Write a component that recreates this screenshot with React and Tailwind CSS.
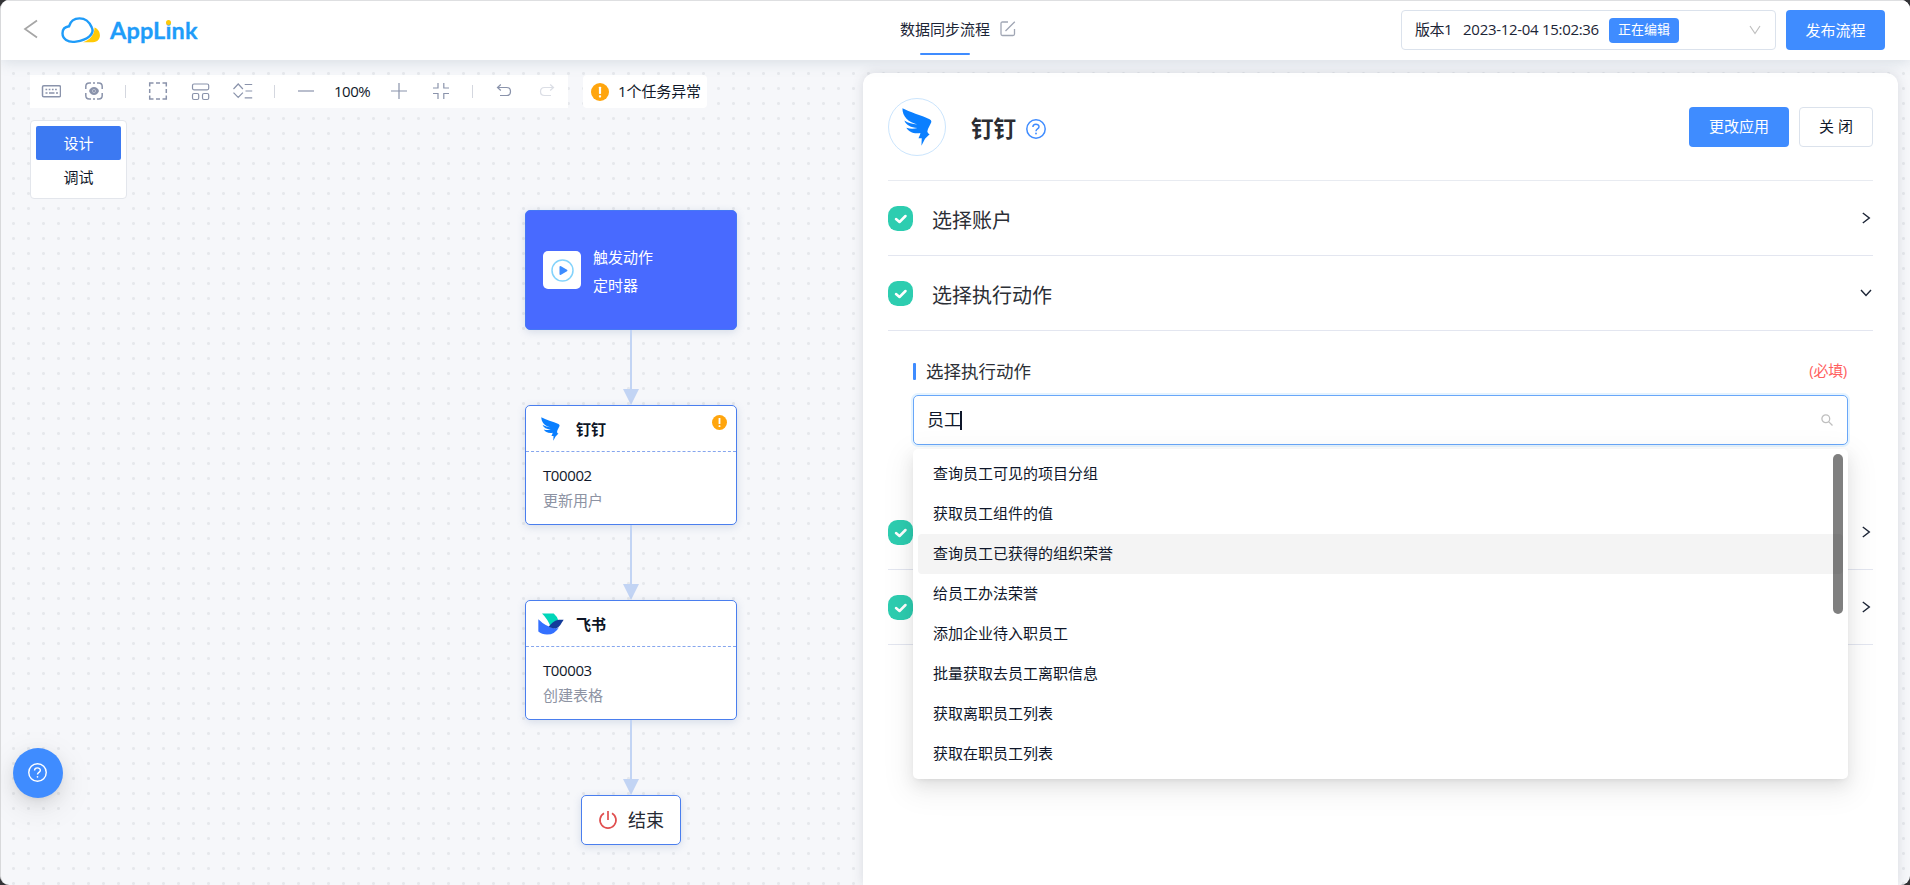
import React from "react";

const options = [
  "查询员工可见的项目分组",
  "获取员工组件的值",
  "查询员工已获得的组织荣誉",
  "给员工办法荣誉",
  "添加企业待入职员工",
  "批量获取去员工离职信息",
  "获取离职员工列表",
  "获取在职员工列表",
];

function DingTalk({ className }) {
  return (
    <svg className={className} viewBox="156 322 91 116" fill="#0a7fff">
      <path d="M157 323C178 334 214 345 240 356Q248 360 244 368L235 386L233 394Q234 401 240 402L226 416L215 437L216 414L206 414Q211 405 212 398C192 402 176 394 169 382C180 386 192 386 203 383C183 382 168 374 163 360C175 368 188 371 202 372C174 365 157 348 157 323Z" />
    </svg>
  );
}

function Feishu({ className }) {
  return (
    <svg className={className} viewBox="113 248 78 65">
      <path fill="#00d6b9" d="M125 249H160Q171 258 174 270Q162 272 152 291Q141 264 125 249Z" />
      <path fill="#3370ff" d="M114 266Q136 288 162 293Q170 295 176 290Q164 312 140 312Q124 312 114 303Z" />
      <path fill="#133c9a" d="M145 289C156 273 168 265 190 268C182 279 178 292 166 294Q154 294 145 289Z" />
    </svg>
  );
}

function CloudLogo() {
  return (
    <svg className="h-[27px] w-[40px]" viewBox="0 0 40 27">
      <path fill="#ffc907" d="M33.5 10.5C41 13 41 25.300 32 25.300H22C29 23 33.500 18 33.500 10.500Z" />
      <path fill="#fff" stroke="#1f9cf9" strokeWidth="2.4" d="M15 24.600C6.500 26 1.500 21.500 1.500 16.300C1.500 12 4.500 9.800 8 9.300C9.500 4 13.500 1.400 18.500 1.400C24.500 1.400 28.500 5 30.800 10.500C34 17 26.500 22.800 15 24.600Z" />
    </svg>
  );
}

function Help({ className }) {
  return (
    <svg className={className} viewBox="0 0 20 20" fill="none" stroke="currentColor">
      <circle cx="10" cy="10" r="9.200" strokeWidth="1.5" />
      <path strokeWidth="1.500" d="M6.900 7.900C6.900 4.200 13 4.300 13 7.700C13 10 10 9.800 10 12.200" />
      <circle cx="10" cy="14.500" r=".9" fill="currentColor" stroke="none" />
    </svg>
  );
}

function Warn({ className }) {
  return (
    <svg className={className} viewBox="0 0 18 18">
      <circle cx="9" cy="9" r="9" fill="#ffa50d" />
      <rect x="7.900" y="3.700" width="2.200" height="7.200" rx=".6" fill="#fff" />
      <rect x="7.900" y="12.200" width="2.200" height="2.200" rx=".6" fill="#fff" />
    </svg>
  );
}

function Check() {
  return (
    <svg className="h-[25px] w-[25px] shrink-0" viewBox="0 0 25 25">
      <rect width="25" height="25" rx="9.500" fill="#2dcdb0" />
      <path d="M8 13L11.500 16L17.500 10" fill="none" stroke="#fff" strokeWidth="2.500" strokeLinecap="round" strokeLinejoin="round" />
    </svg>
  );
}

function Chevron({ down }) {
  return (
    <svg className="h-3 w-3" viewBox="0 0 12 12" fill="none" stroke="#1c2536" strokeWidth="1.400">
      <path d={down ? "M1 3L6 8.500L11 3" : "M2.800 1L9.300 6L2.800 11"} />
    </svg>
  );
}

function Icon({ children, className = "" }) {
  return (
    <svg className={"h-5 w-5 shrink-0 " + className} viewBox="0 0 20 20" fill="none" stroke="#8a93ab" strokeWidth="1.200">
      {children}
    </svg>
  );
}

const Sep = ({ className }) => <i className={"h-[13px] w-px shrink-0 bg-[#d4d7df] " + className} />;

function Toolbar() {
  return (
    <div className="flex h-[33px] w-[538px] items-center bg-white pb-px pl-[11px]">
      <Icon>
        <rect x="1.500" y="4.700" width="18" height="11" rx="1.300" strokeWidth="1.500" />
        <path d="M4.500 8.500H17" strokeWidth="1.600" strokeDasharray="1.700 1.500" />
        <path d="M4.500 12H6.500M8 12H13.500M15 12H17" strokeWidth="1.500" />
      </Icon>
      <Icon className="ml-[23px]">
        <path strokeWidth="1.500" d="M1.800 8V5.500Q1.800 2 5.300 2H7M9 2H11M13 2H14.700Q18.200 2 18.200 5.500V8M18.200 12V14.500Q18.200 18 14.700 18H13M11 18H9M7 18H5.300Q1.800 18 1.800 14.500V12" />
        <path fill="#8a93ab" stroke="none" d="M5 10Q6.500 6 10 6T15 10Q13.500 14 10 14T5 10Z" />
        <circle cx="10" cy="10" r="1.600" strokeWidth=".8" stroke="#c4c9d6" />
      </Icon>
      <Sep className="ml-[21px]" />
      <Icon className="ml-[22px]">
        <path strokeWidth="1.500" d="M1.700 5.500V2H5.500M8 2H12M14.500 2H18.300V5.500M18.300 8V12M18.300 14.500V18H14.500M12 18H8M5.500 18H1.700V14.500M1.700 12V8" />
      </Icon>
      <Icon className="ml-[23px]">
        <rect x="1.500" y="3" width="16.200" height="5.800" rx="1.500" />
        <rect x="1.500" y="12.500" width="6.200" height="6" rx="1.500" />
        <rect x="11.500" y="12.500" width="6.200" height="6" rx="1.500" />
      </Icon>
      <Icon className="ml-[22px]">
        <path d="M.5 8L5.200 3L9.900 8M.5 11.700L5.200 16.500L9.900 11.700M11.700 3.500H19.200M12.500 10H19.200M11.700 16.800H19.200" />
      </Icon>
      <Sep className="ml-[21px]" />
      <Icon className="ml-[21px]"><path d="M2 10H18" /></Icon>
      <span className="ml-[18px] mt-px w-[37px] whitespace-nowrap text-[15px] tracking-[-0.5px] text-[#10182a]">100%</span>
      <Icon className="ml-[18px]"><path d="M2 10H18M10 2V18" /></Icon>
      <Icon className="ml-[22px]">
        <path d="M2 7H7V2M12.800 2V7H18M2 12.500H7V18M12.800 18V12.500H18" />
      </Icon>
      <Sep className="ml-[21px]" />
      <Icon className="ml-[21px]">
        <path d="M6.800 3.500L3.500 6.500L6.800 9.500M3.500 6.500H12.500Q16.500 6.500 16.500 10.500T12.500 14.500H6" />
      </Icon>
      <Icon className="ml-[23px] opacity-30">
        <path d="M13.200 3.500L16.500 6.500L13.200 9.500M16.500 6.500H7.500Q3.500 6.500 3.500 10.500T7.500 14.500H14" />
      </Icon>
    </div>
  );
}

function Arrow() {
  return (
    <svg className="h-[75px] w-4 shrink-0" viewBox="0 0 16 75" fill="#c2d4f4">
      <path d="M7 0H9V59H16L8 75L0 59H7Z" />
    </svg>
  );
}

function Node({ logo, name, code, action, warn }) {
  return (
    <div className="flex h-[120px] w-[212px] shrink-0 flex-col rounded-[5px] border border-[#4a7eee] bg-white shadow-[0_2px_8px_rgba(80,110,160,0.2)]">
      <div className="flex h-[46px] items-center border-b border-dashed border-[#86a6ee] pr-[9px]">
        <span className="flex w-[50px] items-center pl-[12px]">{logo}</span>
        <b className="flex-1 pt-px text-[15px] leading-5 text-[#0d1526]">{name}</b>
        {warn && <Warn className="mb-[12px] h-[15px] w-[15px]" />}
      </div>
      <div className="flex flex-col pl-[17px] pt-[11px]">
        <span className="text-[15px] leading-[25px] tracking-[-0.4px] text-[#10182a]">{code}</span>
        <span className="text-[15px] leading-[25px] text-[#8d93a3]">{action}</span>
      </div>
    </div>
  );
}

function Flow() {
  return (
    <div className="flex w-[212px] flex-col items-center">
      <div className="flex h-[120px] w-[212px] shrink-0 items-center rounded-[5px] border border-[#4678f5] bg-[#486aff] pl-[17px] shadow-[0_2px_8px_rgba(80,110,160,0.2)]">
        <span className="flex h-[38px] w-[38px] items-center justify-center rounded-[5px] bg-white">
          <svg className="h-[23px] w-[23px]" viewBox="0 0 23 23">
            <circle cx="11.500" cy="11.500" r="10.500" fill="none" stroke="#84d3fb" strokeWidth="1.500" />
            <path d="M8.500 8V15Q8.500 16.500 10 15.800L16 12.300Q17 11.500 16 10.700L10 7.200Q8.500 6.500 8.500 8Z" fill="#3d8bff" />
          </svg>
        </span>
        <div className="ml-[12px] flex flex-col pt-[2px] text-[15px] leading-[28px] text-white">
          <span>触发动作</span>
          <span>定时器</span>
        </div>
      </div>
      <Arrow />
      <Node logo={<DingTalk className="ml-[3px] h-6 w-[19px]" />} name="钉钉" code="T00002" action="更新用户" warn />
      <Arrow />
      <Node logo={<Feishu className="h-[22px] w-[26px]" />} name="飞书" code="T00003" action="创建表格" />
      <Arrow />
      <div className="flex h-[50px] w-[100px] shrink-0 items-center rounded-[5px] border border-[#4a7eee] bg-white pl-[16px] shadow-[0_2px_8px_rgba(80,110,160,0.2)]">
        <svg className="h-5 w-5" viewBox="0 0 20 20" fill="none" stroke="#e04f4f" strokeWidth="1.700">
          <path d="M6 3.200A8 8 0 1 0 14 3.200M10 1V10" />
        </svg>
        <span className="ml-[10px] text-[18px] text-[#262a33]">结束</span>
      </div>
    </div>
  );
}

function Row({ title, down }) {
  return (
    <div className="flex h-[75px] shrink-0 items-center border-b border-[#e3e6f0] pr-px">
      <Check />
      <span className="ml-[19px] flex-1 pt-[6px] text-[20px] text-[#2c2f36]">{title}</span>
      <Chevron down={down} />
    </div>
  );
}

function Dropdown() {
  return (
    <div className="absolute -left-px top-[53px] z-10 flex h-[330px] w-[935px] flex-col rounded-[5px] bg-white p-[5px] shadow-[0_6px_16px_0_rgba(0,0,0,0.08),0_3px_6px_-4px_rgba(0,0,0,0.12),0_9px_28px_8px_rgba(0,0,0,0.05)]">
      {options.map((o, i) => (
        <div
          key={o}
          className={
            "flex h-10 shrink-0 items-center rounded-[4px] pb-[2px] pl-[15px] text-[15px] text-[#0f172a] " +
            (i === 2 ? "bg-[#f4f4f4]" : "")
          }
        >
          {o}
        </div>
      ))}
      <div className="absolute right-[5px] top-[5px] h-[160px] w-[10px] rounded-full bg-black/50" />
    </div>
  );
}

function Panel() {
  return (
    <section className="mt-[13px] flex h-[812px] w-[1035px] flex-col rounded-t-[12px] bg-white px-[25px] shadow-[0_0_12px_rgba(60,70,90,0.16)]">
      <div className="flex h-[108px] shrink-0 items-center border-b border-[#e8ebf1]">
        <span className="flex h-[58px] w-[58px] items-center justify-center rounded-full border border-[#cbe5fd]">
          <DingTalk className="h-[38px] w-[30px]" />
        </span>
        <b className="ml-[25px] mt-[4px] text-[22.500px] leading-8 text-[#2b2d33]">钉钉</b>
        <Help className="ml-[10px] mt-[5px] h-5 w-5 text-[#3f8cff]" />
        <button className="ml-auto h-10 w-[100px] rounded-[4px] bg-[#3f8cff] text-[15px] text-white">更改应用</button>
        <button className="ml-[10px] h-10 w-[74px] rounded-[4px] border border-[#dbe2ec] bg-white text-[15px] text-[#10182a]">关 闭</button>
      </div>
      <Row title="选择账户" />
      <Row title="选择执行动作" down />
      <div className="flex h-[164px] shrink-0 flex-col px-[25px] pt-[25px]">
        <div className="flex h-[32px] items-center">
          <i className="mb-[2px] h-[17px] w-[3px] rounded-[1px] bg-[#3f8cff]" />
          <span className="mb-[2px] ml-[10px] text-[17.500px] text-[#2c2f36]">选择执行动作</span>
          <span className="mb-[3px] ml-auto pr-px text-[15px] tracking-[-0.300px] text-[#ff5f5f]">(必填)</span>
        </div>
        <div className="relative mt-[7px] flex h-[50px] w-[935px] shrink-0 items-center rounded-[5px] border border-[#69a7f9] bg-white pl-[13px] pr-[14px] shadow-[0_0_0_2px_rgba(5,145,255,0.1)]">
          <span className="text-[17px] text-[#0f172a]">员工</span>
          <i className="-ml-px h-[19px] w-[2px] bg-[#0f172a]" />
          <svg className="ml-auto h-3 w-3" viewBox="0 0 12 12" fill="none" stroke="#bfbfbf" strokeWidth="1.300">
            <circle cx="4.800" cy="4.800" r="3.900" />
            <path d="M7.600 7.600L11.500 11.500" />
          </svg>
          <Dropdown />
        </div>
      </div>
      <Row title="" />
      <Row title="" />
    </section>
  );
}

function Header() {
  return (
    <header className="z-10 flex h-[60px] shrink-0 border-t border-[#dedfe1] bg-white shadow-[0_2px_14px_rgba(90,120,140,0.2)]">
      <div className="flex w-[899px] items-center pb-[4px]">
        <svg className="ml-[22px] h-5 w-[15px]" viewBox="0 0 15 20" fill="none" stroke="#a6a6a6" strokeWidth="1.700">
          <path d="M14 1.500L2 10L14 18.500" />
        </svg>
        <span className="ml-[23px] mt-[4px]"><CloudLogo /></span>
        <span className="ml-[9px] mt-[2px] flex text-[23.500px] leading-7 tracking-[0.15px] text-[#1f9cf9] font-[Lato] font-bold [-webkit-text-stroke:0.3px_#1f9cf9]">
          AppL
          <span className="relative">
            i
            <i className="absolute left-[calc(50%-2.500px)] top-[4px] h-[5px] w-[5px] rounded-full bg-[#ffc907]" />
          </span>
          nk
        </span>
      </div>
      <div className="flex flex-1 flex-col">
        <div className="flex h-[51px] items-center gap-[10px] pt-[4px]">
          <span className="text-[15px] leading-5 text-[#1c2536]">数据同步流程</span>
          <svg className="h-4 w-4" viewBox="0 0 16 16" fill="none" stroke="#a0a6b4" strokeWidth="1.300">
            <path d="M8 1H2.500Q1 1 1 2.500V13Q1 14.500 2.500 14.500H13Q14.500 14.500 14.500 13V8M5.500 10L14.800 .8" />
          </svg>
        </div>
        <i className="ml-[20px] mt-px h-[2px] w-[50px] rounded-full bg-[#3f8cff]" />
      </div>
      <div className="flex gap-[10px] pr-[25px] pt-[9px]">
        <div className="flex h-10 w-[375px] items-center rounded-[4px] border border-[#dbe2ec] pl-[13px] pr-[14px] text-[15px] text-[#1c2536]">
          <span className="whitespace-nowrap pb-[2px] tracking-[-0.5px]">版本1</span>
          <span className="ml-[11px] w-[137px] whitespace-nowrap pb-[2px] tracking-[-0.300px]">2023-12-04 15:02:36</span>
          <span className="ml-[9px] flex h-[25px] w-[70px] items-center justify-center rounded-[4px] bg-[#3f8cff] text-[13px] text-white">正在编辑</span>
          <svg className="ml-auto h-3 w-3" viewBox="0 0 12 12" fill="none" stroke="#bfbfbf" strokeWidth="1.200">
            <path d="M1 2L6 9.500L11 2" />
          </svg>
        </div>
        <button className="h-10 w-[99px] rounded-[4px] bg-[#3f8cff] text-[15px] text-white">发布流程</button>
      </div>
    </header>
  );
}

export default function App() {
  return (
    <div className="h-[885px] w-[1910px] bg-[#333336] font-['Open_Sans','Noto_Sans_CJK_SC',sans-serif]">
      <div className="flex h-full w-full flex-col overflow-hidden rounded-[9px] border-l border-[#d8d9db] bg-[#f6f7fa]">
        <Header />
        <main className="flex h-[825px] justify-between bg-[radial-gradient(circle,#e6e8ec_1.200px,transparent_1.700px)] bg-[length:15px_15px] bg-[position:5px_6px] pr-[12px]">
          <div className="flex">
            <div className="flex w-[524px] flex-col pl-[29px] pt-[15px]">
              <div className="flex w-[680px] gap-[15px]">
                <Toolbar />
                <div className="flex h-[33px] w-[124px] items-center rounded-[4px] bg-white pl-[8px]">
                  <Warn className="h-[18px] w-[18px]" />
                  <span className="ml-[9px] whitespace-nowrap text-[15px] tracking-[-0.1px] text-[#10182a]">1个任务异常</span>
                </div>
              </div>
              <div className="mt-[12px] flex h-[79px] w-[97px] flex-col rounded-[4px] border border-[#e3e6ec] bg-white p-[5px] text-center text-[15px]">
                <span className="h-[35px] rounded-[2px] bg-[#3c79f2] leading-[34px] text-white">设计</span>
                <span className="leading-[35px] text-[#10182a]">调试</span>
              </div>
              <button className="mt-auto mb-[87px] -ml-[17px] flex h-[50px] w-[50px] items-center justify-center rounded-full bg-[#3f8cff] text-white shadow-[0_6px_16px_0_rgba(0,0,0,0.08),0_3px_6px_-4px_rgba(0,0,0,0.12),0_9px_28px_8px_rgba(0,0,0,0.05)]">
                <Help className="mb-[2px] mr-[2px] h-[19px] w-[19px]" />
              </button>
            </div>
            <div className="pt-[150px]">
              <Flow />
            </div>
          </div>
          <Panel />
        </main>
      </div>
    </div>
  );
}
